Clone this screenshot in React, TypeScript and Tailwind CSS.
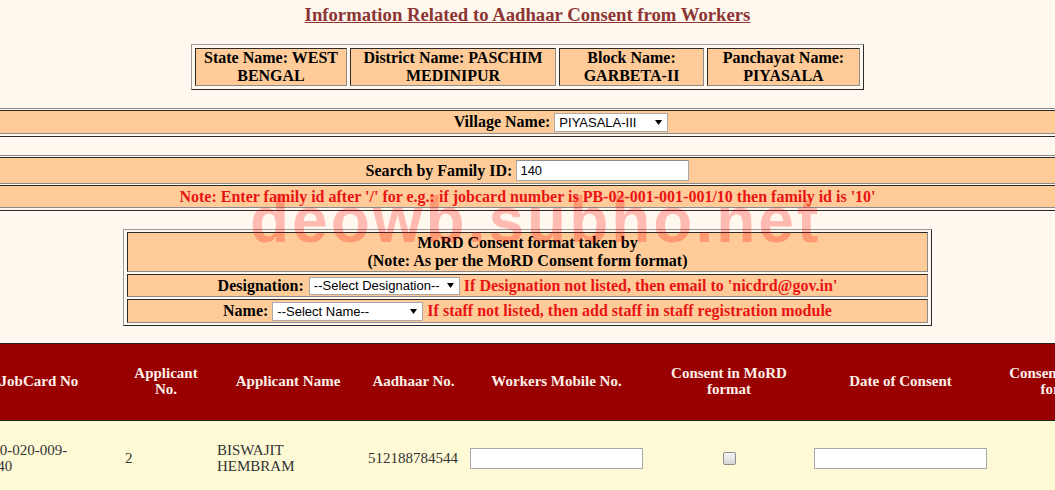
import React from "react";

const Arrow = () => (
  <svg width="7" height="5" viewBox="0 0 7 5" className="shrink-0">
    <path d="M0 0 L7 0 L3.5 5 Z" fill="#000" />
  </svg>
);

const FakeSelect = ({ text, w, h }: { text: string; w: string; h: string }) => (
  <span
    className={`inline-flex ${w} ${h} items-center justify-between border border-[#a9a9a9] bg-white pl-[4px] pr-[5px] align-middle font-['Liberation_Sans',Arial,sans-serif] text-[13px] font-normal leading-none text-black`}
  >
    <span>{text}</span>
    <Arrow />
  </span>
);

const Band = ({ children }: { children: React.ReactNode }) => (
  <div className="flex flex-col gap-[1px] border-y border-t-[#8a8a8a] border-b-[#2a2a2a] pt-[1px] pb-[2px]">
    {children}
  </div>
);

const BandCell = ({ children, cls }: { children: React.ReactNode; cls: string }) => (
  <div className={`flex items-center justify-center border-y border-t-[#2a2a2a] border-b-[#8a8a8a] bg-[#ffcc99] ${cls}`}>
    {children}
  </div>
);

const InfoCell = ({ w, a, b }: { w: string; a: string; b: string }) => (
  <div
    className={`${w} flex flex-col items-center justify-center border border-t-[#2a2a2a] border-l-[#2a2a2a] border-b-[#8a8a8a] border-r-[#8a8a8a] bg-[#ffcc99] text-[16px] font-bold leading-[18px] text-black`}
  >
    <span>{a}</span>
    <span>{b}</span>
  </div>
);

const MordRow = ({ children, cls }: { children: React.ReactNode; cls: string }) => (
  <div
    className={`flex items-center justify-center border border-t-[#2a2a2a] border-l-[#2a2a2a] border-b-[#8a8a8a] border-r-[#8a8a8a] bg-[#ffcc99] text-[16px] font-bold text-black ${cls}`}
  >
    {children}
  </div>
);

const cols = [
  { w: "w-[162px]", h: "JobCard No" },
  { w: "w-[92px]", h: "Applicant No." },
  { w: "w-[152px]", h: "Applicant Name" },
  { w: "w-[99px]", h: "Aadhaar No." },
  { w: "w-[187px]", h: "Workers Mobile No." },
  { w: "w-[158px]", h: "Consent in MoRD format" },
  { w: "w-[185px]", h: "Date of Consent" },
  { w: "w-[139px]", h: "Consent in other format" },
];

export default function App() {
  return (
    <div className="relative min-h-[490px] w-full overflow-hidden bg-[#fff8ee] font-['Liberation_Serif','Times_New_Roman',serif] text-black">
      {/* Title */}
      <div className="pt-[4px] text-center">
        <h3 className="text-[18.72px] font-bold leading-[21px] text-[#8c3535] underline">
          Information Related to Aadhaar Consent from Workers
        </h3>
      </div>

      {/* Info table */}
      <div className="mx-auto mt-[19px] flex w-[673px] gap-[3px] border border-t-[#9a9a9a] border-l-[#9a9a9a] border-b-[#2a2a2a] border-r-[#2a2a2a] p-[3px]">
        <InfoCell w="w-[152px]" a="State Name: WEST" b="BENGAL" />
        <InfoCell w="w-[206px]" a="District Name: PASCHIM" b="MEDINIPUR" />
        <InfoCell w="w-[145px]" a="Block Name:" b="GARBETA-II" />
        <InfoCell w="w-[153px]" a="Panchayat Name:" b="PIYASALA" />
      </div>

      {/* Village band */}
      <div className="mt-[18px]">
        <Band>
          <BandCell cls="h-[24px] pl-[67px] text-[16px] font-bold">
            <span>Village Name:</span>
            <span className="w-[4px]" />
            <FakeSelect text="PIYASALA-III" w="w-[114px]" h="h-[19px]" />
          </BandCell>
        </Band>
      </div>

      {/* Search band */}
      <div className="mt-[18px]">
        <Band>
          <BandCell cls="h-[27px] text-[16px] font-bold">
            <span>Search by Family ID:</span>
            <span className="w-[4px]" />
            <span className="inline-flex h-[21px] w-[173px] items-center border border-[#a9a9a9] border-t-[#8f8f8f] bg-white pl-[3px] font-['Liberation_Sans',Arial,sans-serif] text-[13px] font-normal">
              140
            </span>
          </BandCell>
          <BandCell cls="h-[23px] text-[16px] font-bold text-[#e81414]">
            Note: Enter family id after '/' for e.g.: if jobcard number is PB-02-001-001-001/10 then family id is '10'
          </BandCell>
        </Band>
      </div>

      {/* MoRD table */}
      <div className="mx-auto mt-[18px] flex w-[809px] flex-col gap-[2px] border border-t-[#9a9a9a] border-l-[#9a9a9a] border-b-[#2a2a2a] border-r-[#2a2a2a] px-[3px] py-[2px]">
        <MordRow cls="h-[40px] flex-col leading-[18px]">
          <span>MoRD Consent format taken by</span>
          <span>(Note: As per the MoRD Consent form format)</span>
        </MordRow>
        <MordRow cls="h-[23px]">
          <span>Designation:</span>
          <span className="w-[5px]" />
          <FakeSelect text="--Select Designation--" w="w-[151px]" h="h-[18px]" />
          <span className="w-[4px]" />
          <span className="text-[#e81414]">If Designation not listed, then email to 'nicdrd@gov.in'</span>
        </MordRow>
        <MordRow cls="h-[24px]">
          <span>Name:</span>
          <span className="w-[4px]" />
          <FakeSelect text="--Select Name--" w="w-[151px]" h="h-[19px]" />
          <span className="w-[4px]" />
          <span className="text-[#e81414]">If staff not listed, then add staff in staff registration module</span>
        </MordRow>
      </div>

      {/* Data table */}
      <div className="mt-[17px] w-full">
        <div className="flex h-[78px] border-y border-[#222] bg-[#990000] pb-[3px] text-[15px] font-bold leading-[16px] text-[#fdf0e8]">
          <div className="ml-[-42px] flex">
            {cols.map((c) => (
              <div key={c.h} className={`${c.w} flex shrink-0 items-center justify-center px-[4px] text-center`}>
                {c.h}
              </div>
            ))}
          </div>
        </div>
        <div className="flex h-[76px] bg-[#fffad6] pb-[2px] text-[15px] leading-[16px] text-[#333]">
          <div className="ml-[-42px] flex items-center">
            <div className="w-[162px] shrink-0 px-[5px]">
              WB-10-020-009-
              <br />
              001/140
            </div>
            <div className="w-[92px] shrink-0 px-[5px]">2</div>
            <div className="w-[152px] shrink-0 px-[5px]">
              BISWAJIT
              <br />
              HEMBRAM
            </div>
            <div className="w-[99px] shrink-0 pl-[4px]">512188784544</div>
            <div className="flex w-[187px] shrink-0 justify-center">
              <span className="block h-[21px] w-[173px] border border-[#a9a9a9] bg-white" />
            </div>
            <div className="flex w-[158px] shrink-0 justify-center">
              <span className="block h-[13px] w-[13px] rounded-[2px] border border-[#8f8f8f] bg-gradient-to-b from-[#f6f6f6] to-[#d6d6d6]" />
            </div>
            <div className="flex w-[185px] shrink-0 justify-center">
              <span className="block h-[21px] w-[173px] border border-[#a9a9a9] bg-white" />
            </div>
            <div className="w-[139px] shrink-0" />
          </div>
        </div>
      </div>

      {/* Watermark */}
      <div className="pointer-events-none absolute left-[250px] top-[188px] whitespace-nowrap font-['Liberation_Sans',Arial,sans-serif] text-[64px] font-bold leading-none tracking-[3px] text-[rgba(255,0,0,0.25)]">
        deowb.subho.net
      </div>
    </div>
  );
}
